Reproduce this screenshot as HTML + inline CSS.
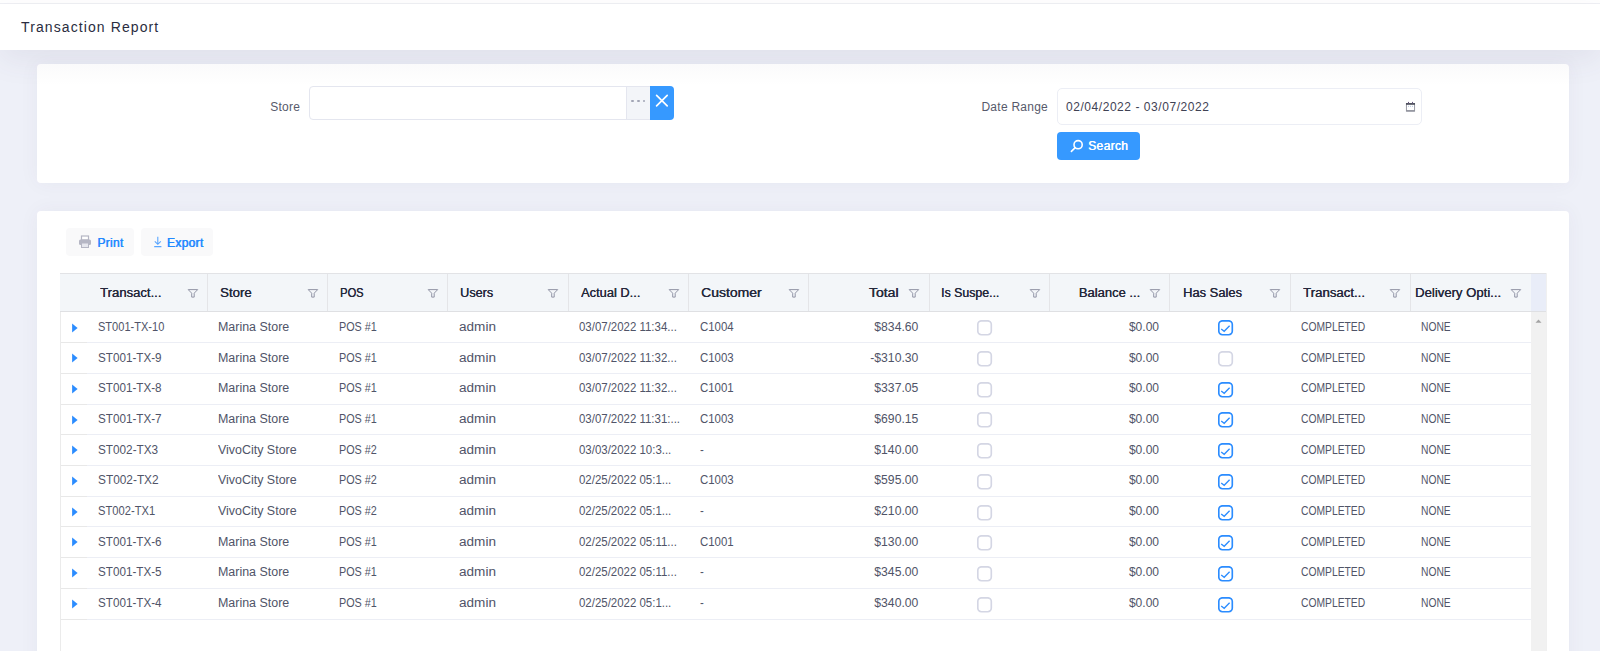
<!DOCTYPE html>
<html>
<head>
<meta charset="utf-8">
<title>Transaction Report</title>
<style>
*{box-sizing:border-box;margin:0;padding:0}
html,body{width:1600px;height:651px;overflow:hidden}
body{background:#eef0f8;font-family:"Liberation Sans",sans-serif;position:relative;color:#3f4254}
.abs{position:absolute}
svg{display:block}
#topwhite{left:0;top:0;width:1600px;height:3px;background:#fff}
#topline{left:0;top:3px;width:1600px;height:1px;background:#eff0f4}
#header{left:0;top:4px;width:1600px;height:46px;background:#fff;box-shadow:0 10px 30px 0 rgba(82,63,105,0.08)}
#title{left:21px;top:18.6px;font-size:14px;letter-spacing:1.1px;color:#2a2d40;white-space:nowrap;line-height:16px}
.card{background:#fff;border-radius:4px;box-shadow:0 0 20px 0 rgba(82,63,105,0.05)}
#card1{left:37px;top:64px;width:1532px;height:119px}
#card2{left:37px;top:211px;width:1532px;height:460px}
.lbl{font-size:12px;color:#575a6b;white-space:nowrap;line-height:14px}
#lblStore{right:1299.7px;top:100px;letter-spacing:0.3px}
#lblDate{right:552px;top:100px;letter-spacing:0.25px}
#storeInput{left:309px;top:86px;width:318px;height:34px;border:1px solid #e4e6ef;border-radius:4px 0 0 4px;background:#fff}
#storeAddon{left:626px;top:86px;width:24px;height:34px;border:1px solid #e4e6ef;border-left-color:#e4e6ef;border-right:0;background:#f3f5f9}
.dot{position:absolute;top:12.5px;width:2.8px;height:2.8px;border-radius:50%;background:#a2a5b5}
#storeClear{left:650px;top:86px;width:24px;height:34px;background:#3699ff;border-radius:0 4px 4px 0}
#dateInput{left:1057px;top:88px;width:365px;height:37px;border:1px solid #eceef5;border-radius:5px;background:#fff}
#dateText{left:1066px;top:100px;letter-spacing:0.55px;font-size:12px;color:#3f4254;white-space:nowrap;line-height:14px}
#cal{left:1404.5px;top:101.2px}
#searchBtn{left:1057px;top:132px;width:83px;height:28px;background:#3699ff;border-radius:4px}
#searchTxt{left:31px;top:6.8px;font-size:12px;font-weight:normal;text-shadow:0.5px 0 0 #fff;letter-spacing:0.35px;color:#fff;line-height:14px;white-space:nowrap}
.tbtn{top:228px;height:28px;background:#f9f9fa;border-radius:4px}
#printBtn{left:66px;width:68px}
#exportBtn{left:141px;width:72px}
.ttxt{top:8px;font-size:12px;font-weight:normal;text-shadow:0.55px 0 0 #2289ff;letter-spacing:0.3px;color:#2289ff;line-height:14px;white-space:nowrap}
#tblLeft{left:60px;top:273px;width:1px;height:400px;background:#ebebeb}
#thead{left:60px;top:273px;width:1471px;height:39px;background:#f3f6f9;border-top:1px solid #e2e3e6;border-bottom:1px solid #dfe0e3}
#gutter{left:1531px;top:273px;width:15px;height:39px;background:#e9edf8;border-top:1px solid #e2e3e6;border-bottom:1px solid #dfe0e3}
#vscroll{left:1531px;top:312px;width:15px;height:360px;background:#f1f1f1}
#tblRight{left:1546px;top:273px;width:1px;height:400px;background:#f0f0f0}
.vsep{top:274px;width:1px;height:37px;background:#e4e5e8}
.hd{top:285.6px;font-size:12.5px;font-weight:normal;text-shadow:0.3px 0 0 #25283b;color:#25283b;white-space:nowrap;line-height:14px}
.fn{top:288px}
.rl1{left:61px;width:26px;height:1px;background:#e8e8e8}
.rl2{left:87px;width:1444px;height:1px;background:#eceef5}
.tri{left:71px}
.cell{font-size:12px;color:#505468;white-space:nowrap;line-height:14px}
.cb{width:15px;height:15.4px;border:1.7px solid #d6d8e5;border-radius:3.5px;background:#fff}
.cb svg{position:absolute;left:-1.7px;top:-1.7px}
.cb.on{border-color:#2b8cff}
#c1grad{left:0;top:0;width:100%;height:22px;border-radius:4px 4px 0 0;background:linear-gradient(rgba(60,60,90,0.025),rgba(60,60,90,0))}

</style>
</head>
<body>
<div class="abs" id="topwhite"></div><div class="abs" id="topline"></div><div class="abs" id="header"></div><div class="abs" id="title">Transaction Report</div><div class="abs card" id="card1"><div class="abs" id="c1grad"></div></div><div class="abs card" id="card2"></div><div class="abs lbl" id="lblStore">Store</div><div class="abs" id="storeInput"></div><div class="abs" id="storeAddon"><span class="dot" style="left:4px"></span><span class="dot" style="left:9.75px"></span><span class="dot" style="left:15.5px"></span></div><div class="abs" id="storeClear"><svg width="24" height="34" viewBox="0 0 24 34"><path d="M6.6 9.3L17.2 19.9M17.2 9.3L6.6 19.9" stroke="#fff" stroke-width="1.7" stroke-linecap="round"/></svg></div><div class="abs lbl" id="lblDate">Date Range</div><div class="abs" id="dateInput"></div><div class="abs" id="dateText">02/04/2022 - 03/07/2022</div><svg class="abs" id="cal" width="11" height="11" viewBox="0 0 11 11"><rect x="1.4" y="2.6" width="8.2" height="7.6" fill="none" stroke="#8f919c" stroke-width="0.9"/><rect x="1" y="2" width="9" height="1.8" fill="#4f525e"/><rect x="3" y="0.9" width="1" height="1.6" fill="#6a5a80"/><rect x="7" y="0.9" width="1" height="1.6" fill="#6a5a80"/><rect x="3" y="4.8" width="1" height="1" fill="#b5c5dd"/><rect x="5" y="4.8" width="1" height="1" fill="#b5c5dd"/><rect x="7" y="4.8" width="1" height="1" fill="#b5c5dd"/><rect x="1.6" y="9.3" width="7.8" height="0.9" fill="#777a86"/></svg><div class="abs" id="searchBtn"><svg class="abs" style="left:12px;top:6px" width="16" height="16" viewBox="0 0 16 16"><circle cx="9.1" cy="6.7" r="4.1" fill="none" stroke="#fff" stroke-width="1.6"/><path d="M6.2 9.6L2.4 13.4" stroke="#fff" stroke-width="1.6" stroke-linecap="round"/></svg><span class="abs" id="searchTxt">Search</span></div><div class="abs tbtn" id="printBtn"><svg class="abs" style="left:12px;top:7px" width="14" height="14" viewBox="0 0 14 14"><rect x="3.5" y="1" width="7" height="4" fill="#fff" stroke="#b5b6c4" stroke-width="1.2"/><rect x="1" y="4.5" width="12" height="5.5" rx="1.5" fill="#b5b6c4"/><rect x="3.5" y="8" width="7" height="4.5" fill="#e6e7ee" stroke="#b5b6c4" stroke-width="1"/></svg><span class="abs ttxt" style="left:31.2px">Print</span></div><div class="abs tbtn" id="exportBtn"><svg class="abs" style="left:12px;top:8px" width="10" height="12" viewBox="0 0 10 12"><path d="M4.8 0.8V8.2M1.8 5.3L4.8 8.3L7.8 5.3M1.2 10.6H8.4" fill="none" stroke="#5aa6ff" stroke-width="1.1"/></svg><span class="abs ttxt" style="left:25.8px">Export</span></div><div class="abs" id="tblLeft"></div><div class="abs" id="thead"></div><div class="abs" id="gutter"></div><div class="abs" id="vscroll"><svg class="abs" style="left:3px;top:6px" width="9" height="6" viewBox="0 0 9 6"><path d="M1.5 4.8L4.5 1.6L7.5 4.8Z" fill="#a3a3a3"/></svg></div><div class="abs" id="tblRight"></div><div class="abs vsep" style="left:207px"></div><div class="abs vsep" style="left:327px"></div><div class="abs vsep" style="left:447px"></div><div class="abs vsep" style="left:568px"></div><div class="abs vsep" style="left:688px"></div><div class="abs vsep" style="left:808px"></div><div class="abs vsep" style="left:929px"></div><div class="abs vsep" style="left:1049px"></div><div class="abs vsep" style="left:1169px"></div><div class="abs vsep" style="left:1290px"></div><div class="abs vsep" style="left:1410px"></div><div class="abs hd" style="left:99.8px;transform:scaleX(1.046);transform-origin:0 0">Transact...</div><div class="abs fn" style="left:186.5px"><svg width="12" height="11" viewBox="0 0 12 11"><path d="M1.2 1.6H10.7L7.2 5.2V9.1H4.7V5.2Z" fill="none" stroke="#8d90a2" stroke-width="0.95" stroke-linejoin="round"/></svg></div><div class="abs hd" style="left:219.5px;transform:scaleX(1.057);transform-origin:0 0">Store</div><div class="abs fn" style="left:306.8px"><svg width="12" height="11" viewBox="0 0 12 11"><path d="M1.2 1.6H10.7L7.2 5.2V9.1H4.7V5.2Z" fill="none" stroke="#8d90a2" stroke-width="0.95" stroke-linejoin="round"/></svg></div><div class="abs hd" style="left:339.8px;transform:scaleX(0.891);transform-origin:0 0">POS</div><div class="abs fn" style="left:427.1px"><svg width="12" height="11" viewBox="0 0 12 11"><path d="M1.2 1.6H10.7L7.2 5.2V9.1H4.7V5.2Z" fill="none" stroke="#8d90a2" stroke-width="0.95" stroke-linejoin="round"/></svg></div><div class="abs hd" style="left:460.2px;transform:scaleX(1.014);transform-origin:0 0">Users</div><div class="abs fn" style="left:547.4px"><svg width="12" height="11" viewBox="0 0 12 11"><path d="M1.2 1.6H10.7L7.2 5.2V9.1H4.7V5.2Z" fill="none" stroke="#8d90a2" stroke-width="0.95" stroke-linejoin="round"/></svg></div><div class="abs hd" style="left:580.9px;transform:scaleX(1.027);transform-origin:0 0">Actual D...</div><div class="abs fn" style="left:667.7px"><svg width="12" height="11" viewBox="0 0 12 11"><path d="M1.2 1.6H10.7L7.2 5.2V9.1H4.7V5.2Z" fill="none" stroke="#8d90a2" stroke-width="0.95" stroke-linejoin="round"/></svg></div><div class="abs hd" style="left:701.3px;transform:scaleX(1.117);transform-origin:0 0">Customer</div><div class="abs fn" style="left:787.9px"><svg width="12" height="11" viewBox="0 0 12 11"><path d="M1.2 1.6H10.7L7.2 5.2V9.1H4.7V5.2Z" fill="none" stroke="#8d90a2" stroke-width="0.95" stroke-linejoin="round"/></svg></div><div class="abs hd r" style="right:701.3px;transform:scaleX(1.121);transform-origin:100% 0">Total</div><div class="abs fn" style="left:908.2px"><svg width="12" height="11" viewBox="0 0 12 11"><path d="M1.2 1.6H10.7L7.2 5.2V9.1H4.7V5.2Z" fill="none" stroke="#8d90a2" stroke-width="0.95" stroke-linejoin="round"/></svg></div><div class="abs hd" style="left:941.3px;transform:scaleX(0.986);transform-origin:0 0">Is Suspe...</div><div class="abs fn" style="left:1028.5px"><svg width="12" height="11" viewBox="0 0 12 11"><path d="M1.2 1.6H10.7L7.2 5.2V9.1H4.7V5.2Z" fill="none" stroke="#8d90a2" stroke-width="0.95" stroke-linejoin="round"/></svg></div><div class="abs hd r" style="right:460.0px;transform:scaleX(1.039);transform-origin:100% 0">Balance ...</div><div class="abs fn" style="left:1148.8px"><svg width="12" height="11" viewBox="0 0 12 11"><path d="M1.2 1.6H10.7L7.2 5.2V9.1H4.7V5.2Z" fill="none" stroke="#8d90a2" stroke-width="0.95" stroke-linejoin="round"/></svg></div><div class="abs hd" style="left:1183.0px;transform:scaleX(1.033);transform-origin:0 0">Has Sales</div><div class="abs fn" style="left:1269.1px"><svg width="12" height="11" viewBox="0 0 12 11"><path d="M1.2 1.6H10.7L7.2 5.2V9.1H4.7V5.2Z" fill="none" stroke="#8d90a2" stroke-width="0.95" stroke-linejoin="round"/></svg></div><div class="abs hd" style="left:1302.5px;transform:scaleX(1.056);transform-origin:0 0">Transact...</div><div class="abs fn" style="left:1389.4px"><svg width="12" height="11" viewBox="0 0 12 11"><path d="M1.2 1.6H10.7L7.2 5.2V9.1H4.7V5.2Z" fill="none" stroke="#8d90a2" stroke-width="0.95" stroke-linejoin="round"/></svg></div><div class="abs hd" style="left:1415.3px;transform:scaleX(1.049);transform-origin:0 0">Delivery Opti...</div><div class="abs fn" style="left:1509.7px"><svg width="12" height="11" viewBox="0 0 12 11"><path d="M1.2 1.6H10.7L7.2 5.2V9.1H4.7V5.2Z" fill="none" stroke="#8d90a2" stroke-width="0.95" stroke-linejoin="round"/></svg></div><div class="abs rl1" style="top:342.21px"></div><div class="abs rl2" style="top:342.21px"></div><svg class="abs tri" style="top:322.50px" width="8" height="11" viewBox="0 0 8 11"><path d="M1.1 0.4L6.6 4.9L1.1 9.4Z" fill="#2b8cff"/></svg><div class="abs cell" style="left:98.0px;top:319.80px;transform:scaleX(0.921);transform-origin:0 0">ST001-TX-10</div><div class="abs cell" style="left:218.3px;top:319.80px;transform:scaleX(1.037);transform-origin:0 0">Marina Store</div><div class="abs cell" style="left:338.6px;top:319.80px;transform:scaleX(0.900);transform-origin:0 0">POS #1</div><div class="abs cell" style="left:458.9px;top:319.80px;transform:scaleX(1.130);transform-origin:0 0">admin</div><div class="abs cell" style="left:579.2px;top:319.80px;transform:scaleX(0.954);transform-origin:0 0">03/07/2022 11:34...</div><div class="abs cell" style="left:699.5px;top:319.80px;transform:scaleX(0.953);transform-origin:0 0">C1004</div><div class="abs cell" style="right:681.2px;top:319.80px;transform:scaleX(1.016);transform-origin:100% 0">$834.60</div><svg class="abs" style="left:977.3px;top:320.30px" width="16" height="16" viewBox="0 0 16 16"><rect x="0.8" y="0.8" width="13.5" height="13.9" rx="3.6" fill="#fff" stroke="#d4d6e4" stroke-width="1.65"/></svg><div class="abs cell" style="right:440.6px;top:319.80px;transform:scaleX(1.003);transform-origin:100% 0">$0.00</div><svg class="abs" style="left:1217.9px;top:320.30px" width="16" height="16" viewBox="0 0 16 16"><rect x="0.8" y="0.8" width="13.5" height="13.9" rx="3.6" fill="#fff" stroke="#2b8cff" stroke-width="1.65"/><path d="M3.2 8.9L6.2 11.3L11.6 5.8" fill="none" stroke="#2b8cff" stroke-width="1.3"/></svg><div class="abs cell" style="left:1300.9px;top:319.80px;transform:scaleX(0.859);transform-origin:0 0">COMPLETED</div><div class="abs cell" style="left:1421.2px;top:319.80px;transform:scaleX(0.855);transform-origin:0 0">NONE</div><div class="abs rl1" style="top:372.92px"></div><div class="abs rl2" style="top:372.92px"></div><svg class="abs tri" style="top:353.21px" width="8" height="11" viewBox="0 0 8 11"><path d="M1.1 0.4L6.6 4.9L1.1 9.4Z" fill="#2b8cff"/></svg><div class="abs cell" style="left:98.0px;top:350.51px;transform:scaleX(0.973);transform-origin:0 0">ST001-TX-9</div><div class="abs cell" style="left:218.3px;top:350.51px;transform:scaleX(1.037);transform-origin:0 0">Marina Store</div><div class="abs cell" style="left:338.6px;top:350.51px;transform:scaleX(0.900);transform-origin:0 0">POS #1</div><div class="abs cell" style="left:458.9px;top:350.51px;transform:scaleX(1.130);transform-origin:0 0">admin</div><div class="abs cell" style="left:579.2px;top:350.51px;transform:scaleX(0.954);transform-origin:0 0">03/07/2022 11:32...</div><div class="abs cell" style="left:699.5px;top:350.51px;transform:scaleX(0.953);transform-origin:0 0">C1003</div><div class="abs cell" style="right:681.2px;top:350.51px;transform:scaleX(1.016);transform-origin:100% 0">-$310.30</div><svg class="abs" style="left:977.3px;top:351.01px" width="16" height="16" viewBox="0 0 16 16"><rect x="0.8" y="0.8" width="13.5" height="13.9" rx="3.6" fill="#fff" stroke="#d4d6e4" stroke-width="1.65"/></svg><div class="abs cell" style="right:440.6px;top:350.51px;transform:scaleX(1.003);transform-origin:100% 0">$0.00</div><svg class="abs" style="left:1217.9px;top:351.01px" width="16" height="16" viewBox="0 0 16 16"><rect x="0.8" y="0.8" width="13.5" height="13.9" rx="3.6" fill="#fff" stroke="#d4d6e4" stroke-width="1.65"/></svg><div class="abs cell" style="left:1300.9px;top:350.51px;transform:scaleX(0.859);transform-origin:0 0">COMPLETED</div><div class="abs cell" style="left:1421.2px;top:350.51px;transform:scaleX(0.855);transform-origin:0 0">NONE</div><div class="abs rl1" style="top:403.63px"></div><div class="abs rl2" style="top:403.63px"></div><svg class="abs tri" style="top:383.92px" width="8" height="11" viewBox="0 0 8 11"><path d="M1.1 0.4L6.6 4.9L1.1 9.4Z" fill="#2b8cff"/></svg><div class="abs cell" style="left:98.0px;top:381.22px;transform:scaleX(0.973);transform-origin:0 0">ST001-TX-8</div><div class="abs cell" style="left:218.3px;top:381.22px;transform:scaleX(1.037);transform-origin:0 0">Marina Store</div><div class="abs cell" style="left:338.6px;top:381.22px;transform:scaleX(0.900);transform-origin:0 0">POS #1</div><div class="abs cell" style="left:458.9px;top:381.22px;transform:scaleX(1.130);transform-origin:0 0">admin</div><div class="abs cell" style="left:579.2px;top:381.22px;transform:scaleX(0.954);transform-origin:0 0">03/07/2022 11:32...</div><div class="abs cell" style="left:699.5px;top:381.22px;transform:scaleX(0.953);transform-origin:0 0">C1001</div><div class="abs cell" style="right:681.2px;top:381.22px;transform:scaleX(1.016);transform-origin:100% 0">$337.05</div><svg class="abs" style="left:977.3px;top:381.72px" width="16" height="16" viewBox="0 0 16 16"><rect x="0.8" y="0.8" width="13.5" height="13.9" rx="3.6" fill="#fff" stroke="#d4d6e4" stroke-width="1.65"/></svg><div class="abs cell" style="right:440.6px;top:381.22px;transform:scaleX(1.003);transform-origin:100% 0">$0.00</div><svg class="abs" style="left:1217.9px;top:381.72px" width="16" height="16" viewBox="0 0 16 16"><rect x="0.8" y="0.8" width="13.5" height="13.9" rx="3.6" fill="#fff" stroke="#2b8cff" stroke-width="1.65"/><path d="M3.2 8.9L6.2 11.3L11.6 5.8" fill="none" stroke="#2b8cff" stroke-width="1.3"/></svg><div class="abs cell" style="left:1300.9px;top:381.22px;transform:scaleX(0.859);transform-origin:0 0">COMPLETED</div><div class="abs cell" style="left:1421.2px;top:381.22px;transform:scaleX(0.855);transform-origin:0 0">NONE</div><div class="abs rl1" style="top:434.34px"></div><div class="abs rl2" style="top:434.34px"></div><svg class="abs tri" style="top:414.63px" width="8" height="11" viewBox="0 0 8 11"><path d="M1.1 0.4L6.6 4.9L1.1 9.4Z" fill="#2b8cff"/></svg><div class="abs cell" style="left:98.0px;top:411.93px;transform:scaleX(0.973);transform-origin:0 0">ST001-TX-7</div><div class="abs cell" style="left:218.3px;top:411.93px;transform:scaleX(1.037);transform-origin:0 0">Marina Store</div><div class="abs cell" style="left:338.6px;top:411.93px;transform:scaleX(0.900);transform-origin:0 0">POS #1</div><div class="abs cell" style="left:458.9px;top:411.93px;transform:scaleX(1.130);transform-origin:0 0">admin</div><div class="abs cell" style="left:579.2px;top:411.93px;transform:scaleX(0.954);transform-origin:0 0">03/07/2022 11:31:...</div><div class="abs cell" style="left:699.5px;top:411.93px;transform:scaleX(0.953);transform-origin:0 0">C1003</div><div class="abs cell" style="right:681.2px;top:411.93px;transform:scaleX(1.016);transform-origin:100% 0">$690.15</div><svg class="abs" style="left:977.3px;top:412.43px" width="16" height="16" viewBox="0 0 16 16"><rect x="0.8" y="0.8" width="13.5" height="13.9" rx="3.6" fill="#fff" stroke="#d4d6e4" stroke-width="1.65"/></svg><div class="abs cell" style="right:440.6px;top:411.93px;transform:scaleX(1.003);transform-origin:100% 0">$0.00</div><svg class="abs" style="left:1217.9px;top:412.43px" width="16" height="16" viewBox="0 0 16 16"><rect x="0.8" y="0.8" width="13.5" height="13.9" rx="3.6" fill="#fff" stroke="#2b8cff" stroke-width="1.65"/><path d="M3.2 8.9L6.2 11.3L11.6 5.8" fill="none" stroke="#2b8cff" stroke-width="1.3"/></svg><div class="abs cell" style="left:1300.9px;top:411.93px;transform:scaleX(0.859);transform-origin:0 0">COMPLETED</div><div class="abs cell" style="left:1421.2px;top:411.93px;transform:scaleX(0.855);transform-origin:0 0">NONE</div><div class="abs rl1" style="top:465.05px"></div><div class="abs rl2" style="top:465.05px"></div><svg class="abs tri" style="top:445.34px" width="8" height="11" viewBox="0 0 8 11"><path d="M1.1 0.4L6.6 4.9L1.1 9.4Z" fill="#2b8cff"/></svg><div class="abs cell" style="left:98.0px;top:442.64px;transform:scaleX(0.980);transform-origin:0 0">ST002-TX3</div><div class="abs cell" style="left:218.3px;top:442.64px;transform:scaleX(1.037);transform-origin:0 0">VivoCity Store</div><div class="abs cell" style="left:338.6px;top:442.64px;transform:scaleX(0.900);transform-origin:0 0">POS #2</div><div class="abs cell" style="left:458.9px;top:442.64px;transform:scaleX(1.130);transform-origin:0 0">admin</div><div class="abs cell" style="left:579.2px;top:442.64px;transform:scaleX(0.954);transform-origin:0 0">03/03/2022 10:3...</div><div class="abs cell" style="left:699.5px;top:442.64px;transform:scaleX(0.953);transform-origin:0 0">-</div><div class="abs cell" style="right:681.2px;top:442.64px;transform:scaleX(1.016);transform-origin:100% 0">$140.00</div><svg class="abs" style="left:977.3px;top:443.14px" width="16" height="16" viewBox="0 0 16 16"><rect x="0.8" y="0.8" width="13.5" height="13.9" rx="3.6" fill="#fff" stroke="#d4d6e4" stroke-width="1.65"/></svg><div class="abs cell" style="right:440.6px;top:442.64px;transform:scaleX(1.003);transform-origin:100% 0">$0.00</div><svg class="abs" style="left:1217.9px;top:443.14px" width="16" height="16" viewBox="0 0 16 16"><rect x="0.8" y="0.8" width="13.5" height="13.9" rx="3.6" fill="#fff" stroke="#2b8cff" stroke-width="1.65"/><path d="M3.2 8.9L6.2 11.3L11.6 5.8" fill="none" stroke="#2b8cff" stroke-width="1.3"/></svg><div class="abs cell" style="left:1300.9px;top:442.64px;transform:scaleX(0.859);transform-origin:0 0">COMPLETED</div><div class="abs cell" style="left:1421.2px;top:442.64px;transform:scaleX(0.855);transform-origin:0 0">NONE</div><div class="abs rl1" style="top:495.76px"></div><div class="abs rl2" style="top:495.76px"></div><svg class="abs tri" style="top:476.05px" width="8" height="11" viewBox="0 0 8 11"><path d="M1.1 0.4L6.6 4.9L1.1 9.4Z" fill="#2b8cff"/></svg><div class="abs cell" style="left:98.0px;top:473.35px;transform:scaleX(0.988);transform-origin:0 0">ST002-TX2</div><div class="abs cell" style="left:218.3px;top:473.35px;transform:scaleX(1.037);transform-origin:0 0">VivoCity Store</div><div class="abs cell" style="left:338.6px;top:473.35px;transform:scaleX(0.900);transform-origin:0 0">POS #2</div><div class="abs cell" style="left:458.9px;top:473.35px;transform:scaleX(1.130);transform-origin:0 0">admin</div><div class="abs cell" style="left:579.2px;top:473.35px;transform:scaleX(0.954);transform-origin:0 0">02/25/2022 05:1...</div><div class="abs cell" style="left:699.5px;top:473.35px;transform:scaleX(0.953);transform-origin:0 0">C1003</div><div class="abs cell" style="right:681.2px;top:473.35px;transform:scaleX(1.016);transform-origin:100% 0">$595.00</div><svg class="abs" style="left:977.3px;top:473.85px" width="16" height="16" viewBox="0 0 16 16"><rect x="0.8" y="0.8" width="13.5" height="13.9" rx="3.6" fill="#fff" stroke="#d4d6e4" stroke-width="1.65"/></svg><div class="abs cell" style="right:440.6px;top:473.35px;transform:scaleX(1.003);transform-origin:100% 0">$0.00</div><svg class="abs" style="left:1217.9px;top:473.85px" width="16" height="16" viewBox="0 0 16 16"><rect x="0.8" y="0.8" width="13.5" height="13.9" rx="3.6" fill="#fff" stroke="#2b8cff" stroke-width="1.65"/><path d="M3.2 8.9L6.2 11.3L11.6 5.8" fill="none" stroke="#2b8cff" stroke-width="1.3"/></svg><div class="abs cell" style="left:1300.9px;top:473.35px;transform:scaleX(0.859);transform-origin:0 0">COMPLETED</div><div class="abs cell" style="left:1421.2px;top:473.35px;transform:scaleX(0.855);transform-origin:0 0">NONE</div><div class="abs rl1" style="top:526.47px"></div><div class="abs rl2" style="top:526.47px"></div><svg class="abs tri" style="top:506.76px" width="8" height="11" viewBox="0 0 8 11"><path d="M1.1 0.4L6.6 4.9L1.1 9.4Z" fill="#2b8cff"/></svg><div class="abs cell" style="left:98.0px;top:504.06px;transform:scaleX(0.931);transform-origin:0 0">ST002-TX1</div><div class="abs cell" style="left:218.3px;top:504.06px;transform:scaleX(1.037);transform-origin:0 0">VivoCity Store</div><div class="abs cell" style="left:338.6px;top:504.06px;transform:scaleX(0.900);transform-origin:0 0">POS #2</div><div class="abs cell" style="left:458.9px;top:504.06px;transform:scaleX(1.130);transform-origin:0 0">admin</div><div class="abs cell" style="left:579.2px;top:504.06px;transform:scaleX(0.954);transform-origin:0 0">02/25/2022 05:1...</div><div class="abs cell" style="left:699.5px;top:504.06px;transform:scaleX(0.953);transform-origin:0 0">-</div><div class="abs cell" style="right:681.2px;top:504.06px;transform:scaleX(1.016);transform-origin:100% 0">$210.00</div><svg class="abs" style="left:977.3px;top:504.56px" width="16" height="16" viewBox="0 0 16 16"><rect x="0.8" y="0.8" width="13.5" height="13.9" rx="3.6" fill="#fff" stroke="#d4d6e4" stroke-width="1.65"/></svg><div class="abs cell" style="right:440.6px;top:504.06px;transform:scaleX(1.003);transform-origin:100% 0">$0.00</div><svg class="abs" style="left:1217.9px;top:504.56px" width="16" height="16" viewBox="0 0 16 16"><rect x="0.8" y="0.8" width="13.5" height="13.9" rx="3.6" fill="#fff" stroke="#2b8cff" stroke-width="1.65"/><path d="M3.2 8.9L6.2 11.3L11.6 5.8" fill="none" stroke="#2b8cff" stroke-width="1.3"/></svg><div class="abs cell" style="left:1300.9px;top:504.06px;transform:scaleX(0.859);transform-origin:0 0">COMPLETED</div><div class="abs cell" style="left:1421.2px;top:504.06px;transform:scaleX(0.855);transform-origin:0 0">NONE</div><div class="abs rl1" style="top:557.18px"></div><div class="abs rl2" style="top:557.18px"></div><svg class="abs tri" style="top:537.47px" width="8" height="11" viewBox="0 0 8 11"><path d="M1.1 0.4L6.6 4.9L1.1 9.4Z" fill="#2b8cff"/></svg><div class="abs cell" style="left:98.0px;top:534.77px;transform:scaleX(0.973);transform-origin:0 0">ST001-TX-6</div><div class="abs cell" style="left:218.3px;top:534.77px;transform:scaleX(1.037);transform-origin:0 0">Marina Store</div><div class="abs cell" style="left:338.6px;top:534.77px;transform:scaleX(0.900);transform-origin:0 0">POS #1</div><div class="abs cell" style="left:458.9px;top:534.77px;transform:scaleX(1.130);transform-origin:0 0">admin</div><div class="abs cell" style="left:579.2px;top:534.77px;transform:scaleX(0.954);transform-origin:0 0">02/25/2022 05:11...</div><div class="abs cell" style="left:699.5px;top:534.77px;transform:scaleX(0.953);transform-origin:0 0">C1001</div><div class="abs cell" style="right:681.2px;top:534.77px;transform:scaleX(1.016);transform-origin:100% 0">$130.00</div><svg class="abs" style="left:977.3px;top:535.27px" width="16" height="16" viewBox="0 0 16 16"><rect x="0.8" y="0.8" width="13.5" height="13.9" rx="3.6" fill="#fff" stroke="#d4d6e4" stroke-width="1.65"/></svg><div class="abs cell" style="right:440.6px;top:534.77px;transform:scaleX(1.003);transform-origin:100% 0">$0.00</div><svg class="abs" style="left:1217.9px;top:535.27px" width="16" height="16" viewBox="0 0 16 16"><rect x="0.8" y="0.8" width="13.5" height="13.9" rx="3.6" fill="#fff" stroke="#2b8cff" stroke-width="1.65"/><path d="M3.2 8.9L6.2 11.3L11.6 5.8" fill="none" stroke="#2b8cff" stroke-width="1.3"/></svg><div class="abs cell" style="left:1300.9px;top:534.77px;transform:scaleX(0.859);transform-origin:0 0">COMPLETED</div><div class="abs cell" style="left:1421.2px;top:534.77px;transform:scaleX(0.855);transform-origin:0 0">NONE</div><div class="abs rl1" style="top:587.89px"></div><div class="abs rl2" style="top:587.89px"></div><svg class="abs tri" style="top:568.18px" width="8" height="11" viewBox="0 0 8 11"><path d="M1.1 0.4L6.6 4.9L1.1 9.4Z" fill="#2b8cff"/></svg><div class="abs cell" style="left:98.0px;top:565.48px;transform:scaleX(0.973);transform-origin:0 0">ST001-TX-5</div><div class="abs cell" style="left:218.3px;top:565.48px;transform:scaleX(1.037);transform-origin:0 0">Marina Store</div><div class="abs cell" style="left:338.6px;top:565.48px;transform:scaleX(0.900);transform-origin:0 0">POS #1</div><div class="abs cell" style="left:458.9px;top:565.48px;transform:scaleX(1.130);transform-origin:0 0">admin</div><div class="abs cell" style="left:579.2px;top:565.48px;transform:scaleX(0.954);transform-origin:0 0">02/25/2022 05:11...</div><div class="abs cell" style="left:699.5px;top:565.48px;transform:scaleX(0.953);transform-origin:0 0">-</div><div class="abs cell" style="right:681.2px;top:565.48px;transform:scaleX(1.016);transform-origin:100% 0">$345.00</div><svg class="abs" style="left:977.3px;top:565.98px" width="16" height="16" viewBox="0 0 16 16"><rect x="0.8" y="0.8" width="13.5" height="13.9" rx="3.6" fill="#fff" stroke="#d4d6e4" stroke-width="1.65"/></svg><div class="abs cell" style="right:440.6px;top:565.48px;transform:scaleX(1.003);transform-origin:100% 0">$0.00</div><svg class="abs" style="left:1217.9px;top:565.98px" width="16" height="16" viewBox="0 0 16 16"><rect x="0.8" y="0.8" width="13.5" height="13.9" rx="3.6" fill="#fff" stroke="#2b8cff" stroke-width="1.65"/><path d="M3.2 8.9L6.2 11.3L11.6 5.8" fill="none" stroke="#2b8cff" stroke-width="1.3"/></svg><div class="abs cell" style="left:1300.9px;top:565.48px;transform:scaleX(0.859);transform-origin:0 0">COMPLETED</div><div class="abs cell" style="left:1421.2px;top:565.48px;transform:scaleX(0.855);transform-origin:0 0">NONE</div><div class="abs rl1" style="top:618.60px"></div><div class="abs rl2" style="top:618.60px"></div><svg class="abs tri" style="top:598.89px" width="8" height="11" viewBox="0 0 8 11"><path d="M1.1 0.4L6.6 4.9L1.1 9.4Z" fill="#2b8cff"/></svg><div class="abs cell" style="left:98.0px;top:596.19px;transform:scaleX(0.973);transform-origin:0 0">ST001-TX-4</div><div class="abs cell" style="left:218.3px;top:596.19px;transform:scaleX(1.037);transform-origin:0 0">Marina Store</div><div class="abs cell" style="left:338.6px;top:596.19px;transform:scaleX(0.900);transform-origin:0 0">POS #1</div><div class="abs cell" style="left:458.9px;top:596.19px;transform:scaleX(1.130);transform-origin:0 0">admin</div><div class="abs cell" style="left:579.2px;top:596.19px;transform:scaleX(0.954);transform-origin:0 0">02/25/2022 05:1...</div><div class="abs cell" style="left:699.5px;top:596.19px;transform:scaleX(0.953);transform-origin:0 0">-</div><div class="abs cell" style="right:681.2px;top:596.19px;transform:scaleX(1.016);transform-origin:100% 0">$340.00</div><svg class="abs" style="left:977.3px;top:596.69px" width="16" height="16" viewBox="0 0 16 16"><rect x="0.8" y="0.8" width="13.5" height="13.9" rx="3.6" fill="#fff" stroke="#d4d6e4" stroke-width="1.65"/></svg><div class="abs cell" style="right:440.6px;top:596.19px;transform:scaleX(1.003);transform-origin:100% 0">$0.00</div><svg class="abs" style="left:1217.9px;top:596.69px" width="16" height="16" viewBox="0 0 16 16"><rect x="0.8" y="0.8" width="13.5" height="13.9" rx="3.6" fill="#fff" stroke="#2b8cff" stroke-width="1.65"/><path d="M3.2 8.9L6.2 11.3L11.6 5.8" fill="none" stroke="#2b8cff" stroke-width="1.3"/></svg><div class="abs cell" style="left:1300.9px;top:596.19px;transform:scaleX(0.859);transform-origin:0 0">COMPLETED</div><div class="abs cell" style="left:1421.2px;top:596.19px;transform:scaleX(0.855);transform-origin:0 0">NONE</div></body>
</html>
